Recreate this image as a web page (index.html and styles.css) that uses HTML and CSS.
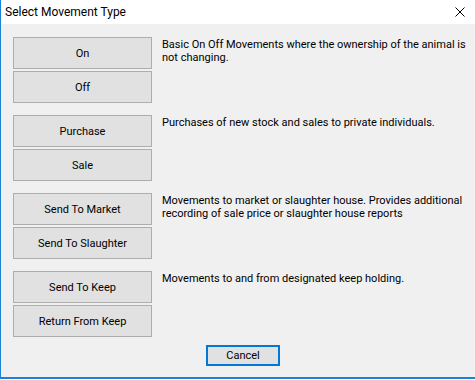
FILE: index.html
```html
<!DOCTYPE html>
<html lang="en">
<head>
  <meta charset="UTF-8" />
  <title>Select Movement Type</title>
  <link rel="stylesheet" href="styles.css">
</head>
<body>
  <div class="window">
    <div class="titlebar">
      <span class="title">Select Movement Type</span>
      <button class="close-btn" title="Close">
        <svg width="10" height="10" viewBox="0 0 10 10">
          <path d="M0.5 0.5 L9.5 9.5 M9.5 0.5 L0.5 9.5" stroke="#000" stroke-width="1" fill="none"/>
        </svg>
      </button>
    </div>

    <div class="content">
      <div class="group">
        <div class="btn-stack">
          <button class="btn">On</button>
          <button class="btn">Off</button>
        </div>
        <p class="desc">Basic On Off Movements where the ownership of the animal is not changing.</p>
      </div>

      <div class="group">
        <div class="btn-stack">
          <button class="btn">Purchase</button>
          <button class="btn">Sale</button>
        </div>
        <p class="desc">Purchases of new stock and sales to private individuals.</p>
      </div>

      <div class="group">
        <div class="btn-stack">
          <button class="btn">Send To Market</button>
          <button class="btn">Send To Slaughter</button>
        </div>
        <p class="desc">Movements to market or slaughter house. Provides additional recording of sale price or slaughter house reports</p>
      </div>

      <div class="group">
        <div class="btn-stack">
          <button class="btn">Send To Keep</button>
          <button class="btn">Return From Keep</button>
        </div>
        <p class="desc">Movements to and from designated keep holding.</p>
      </div>

      <div class="footer">
        <button class="btn cancel-btn">Cancel</button>
      </div>
    </div>
  </div>
</body>
</html>
```

FILE: styles.css
```css
:root {
  --face: #f0f0f0;
  --btn: #e1e1e1;
  --btn-border: #adadad;
  --accent: #0078d7;
  --frame: #1883d7;
}

* {
  box-sizing: border-box;
}

body {
  margin: 0;
  font-family: Roboto, "Noto Sans", sans-serif;
  font-size: 11px;
  color: #000;
  background: #fff;
}

.window {
  width: 475px;
  height: 379px;
  background: var(--face);
  border-left: 1px solid var(--frame);
  border-bottom: 2px solid var(--frame);
  display: flex;
  flex-direction: column;
}

.titlebar {
  height: 24px;
  background: #fff;
  display: flex;
  align-items: center;
  justify-content: space-between;
  padding-left: 4px;
}

.title {
  font-size: 12px;
  line-height: 24px;
}

.close-btn {
  width: 40px;
  height: 24px;
  border: none;
  background: none;
  padding: 0;
  margin-right: -5px;
  display: flex;
  align-items: center;
  justify-content: center;
}

.content {
  padding: 13px 0 0 12px;
  display: flex;
  flex-direction: column;
}

.group {
  display: flex;
  gap: 10px;
  margin-bottom: 12px;
}

.btn-stack {
  display: flex;
  flex-direction: column;
  gap: 2px;
}

.btn {
  width: 139px;
  height: 32px;
  background: var(--btn);
  border: 1px solid var(--btn-border);
  font-family: inherit;
  font-size: 11px;
  color: #000;
  padding: 0;
}

.desc {
  margin: 0;
  width: 308px;
  line-height: 13px;
  padding-top: 1px;
}

.footer {
  margin-top: -4px;
  padding-left: 193px;
}

.cancel-btn {
  width: 74px;
  height: 21px;
  border: 2px solid var(--accent);
}
```
